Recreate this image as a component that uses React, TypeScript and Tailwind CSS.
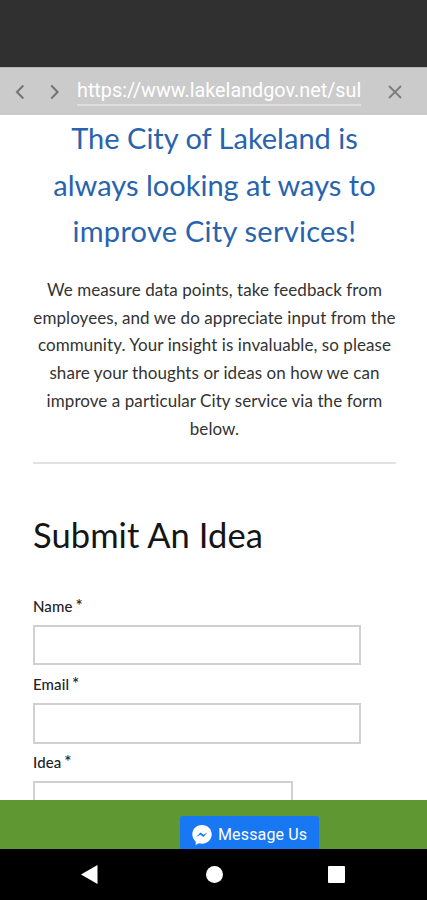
const INTRO_LINES = [
  "We measure data points, take feedback from",
  "employees, and we do appreciate input from the",
  "community. Your insight is invaluable, so please",
  "share your thoughts or ideas on how we can",
  "improve a particular City service via the form",
  "below.",
];

function BrowserBar() {
  return (
    <div className="flex h-12 shrink-0 items-start border-t border-[#b5b5b5] bg-[#cbcbcb] font-[Roboto,sans-serif]">
      <button className="ml-[14px] mt-[16px]" aria-label="Back">
        <svg width="12" height="16" viewBox="0 0 12 16" fill="none" stroke="#737373" strokeWidth="2">
          <path d="M9.3 1.5 3 8l6.3 6.5" />
        </svg>
      </button>
      <button className="ml-[22px] mt-[16px]" aria-label="Forward">
        <svg width="12" height="16" viewBox="0 0 12 16" fill="none" stroke="#737373" strokeWidth="2">
          <path d="M3.3 1.5 9.6 8l-6.3 6.5" />
        </svg>
      </button>
      <div className="ml-[17px] mt-[8px] h-[30px] w-[284px] border-b-2 border-[#dedede] text-[19.8px] leading-[30px] whitespace-nowrap text-white">
        https://www.lakelandgov.net/sul
      </div>
      <button className="ml-[27px] mt-[17px]" aria-label="Close">
        <svg width="14" height="14" viewBox="0 0 14 14" fill="none" stroke="#7c7c7c" strokeWidth="1.8">
          <path d="m1 1 12 12M13 1 1 13" />
        </svg>
      </button>
    </div>
  );
}

function FieldLabel({ text }: { text: string }) {
  return (
    <label className="block h-[20px] text-[15px] leading-[20px] font-medium tracking-[0.1px]">
      {text}
      <span className="ml-[3px] text-[17px] leading-[18px]">*</span>
    </label>
  );
}

function IdeaForm() {
  return (
    <form>
      <FieldLabel text="Name" />
      <input className="mt-[9px] mb-[9px] block h-[40px] w-[328px] border-2 border-[#d0d0d0] px-2" />
      <FieldLabel text="Email" />
      <input className="mt-[9px] mb-[8px] block h-[41px] w-[328px] border-2 border-[#d0d0d0] px-2" />
      <FieldLabel text="Idea" />
      <textarea className="mt-[9px] block h-[100px] w-[260px] resize-none border-2 border-[#d0d0d0] px-2" />
    </form>
  );
}

function SystemNav() {
  return (
    <nav className="flex h-[51px] shrink-0 items-center bg-black pl-[81px]">
      <svg width="17" height="19" viewBox="0 0 17 19" fill="#fff">
        <path d="M16.5 0v19L0 9.5Z" />
      </svg>
      <span className="ml-[108px] h-[17px] w-[17px] rounded-full bg-white" />
      <span className="ml-[105px] h-[17px] w-[17px] rounded-[1px] bg-white" />
    </nav>
  );
}

export default function App() {
  return (
    <div className="flex h-[900px] w-[427px] flex-col overflow-hidden bg-white font-[Lato,sans-serif] text-[#222]">
      <div className="h-[67px] shrink-0 bg-[#303030]" />
      <BrowserBar />
      <main className="h-[685px] shrink-0 overflow-hidden pr-[31px] pl-[33px]">
        <h2 className="text-center text-[29px] leading-[46.5px] whitespace-nowrap text-[#2863ae]">
          The City of Lakeland is
          <br />
          always looking at ways to
          <br />
          <span className="tracking-[0.25px]">improve City services!</span>
        </h2>
        <p className="mt-[21.5px] text-center text-[17px] leading-[27.7px] tracking-[0.07px] whitespace-nowrap text-[#333]">
          {INTRO_LINES.map((line) => (
            <span key={line} className="block">
              {line}
            </span>
          ))}
        </p>
        <hr className="mt-[19.5px] w-[363px] border-t-2 border-[#e2e2e2]" />
        <h1 className="mt-[46px] mb-[36px] text-[34.5px] leading-[50px] tracking-[0.08px] text-[#151515]">
          Submit An Idea
        </h1>
        <IdeaForm />
      </main>
      <footer className="flex h-[49px] shrink-0 items-end bg-[#5f9833] pl-[180px]">
        <button className="flex h-[33px] w-[139px] items-center gap-[6px] rounded-t-[3px] bg-[#1877f2] pt-[5px] pl-3 font-[Roboto,sans-serif] text-[16px] tracking-[0.15px] whitespace-nowrap text-white">
          <svg width="20" height="20" viewBox="0 0 20 20">
            <path
              d="M10 0C4.4 0 .3 4.1.3 9.3c0 2.9 1.3 5.4 3.4 7.1V20l3.1-1.7c1 .3 2.1.4 3.2.4 5.6 0 9.7-4.1 9.7-9.4S15.6 0 10 0Z"
              fill="#fff"
            />
            <path d="m4.2 12 4.2-4.5 3 2.3L15.5 7.5l-4.1 4.4-3-2.2Z" fill="#1877f2" />
          </svg>
          Message Us
        </button>
      </footer>
      <SystemNav />
    </div>
  );
}
